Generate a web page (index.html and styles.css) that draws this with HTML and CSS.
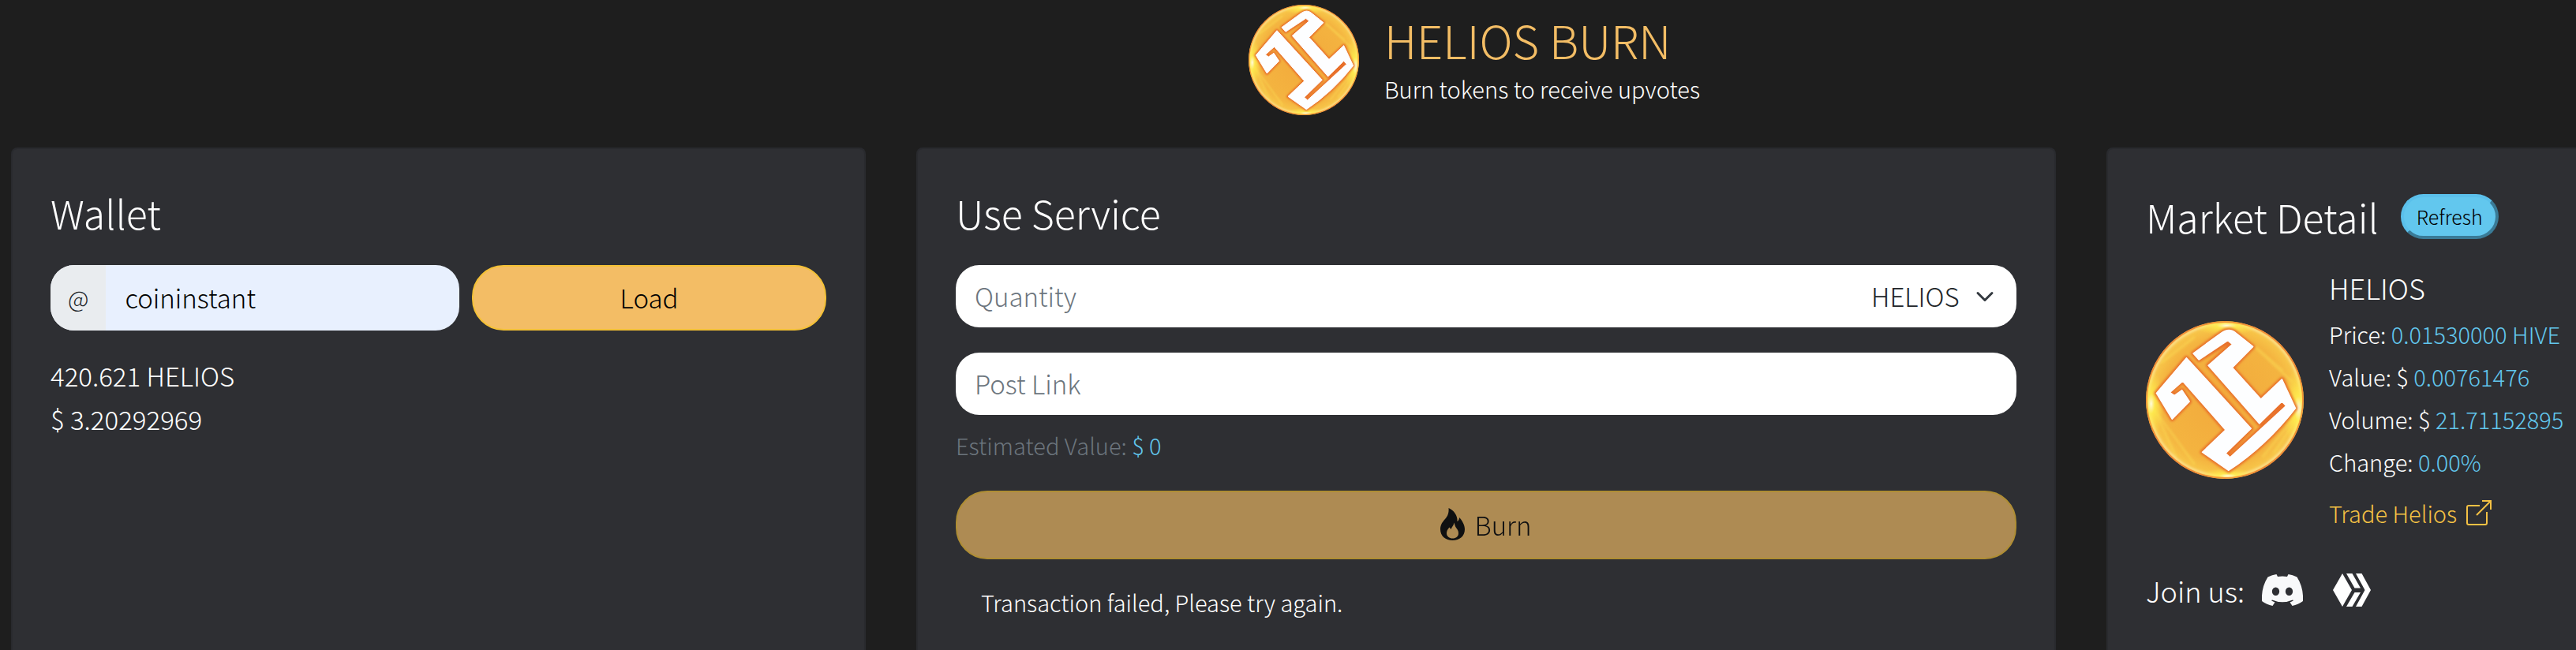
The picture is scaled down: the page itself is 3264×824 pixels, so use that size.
FILE: index.html
```html
<!DOCTYPE html>
<html lang="en">
<head>
<meta charset="utf-8">
<title>Helios Burn</title>
<meta name="viewport" content="width=device-width, initial-scale=1">
<link rel="stylesheet" href="styles.css">
</head>
<body>
<svg class="defs" aria-hidden="true">
  <defs>
    <radialGradient id="coin-fill" cx="50%" cy="50%" r="50%">
      <stop offset="0" stop-color="#f2a93c"/>
      <stop offset="0.8" stop-color="#f4b440"/>
      <stop offset="0.93" stop-color="#f7c448"/>
      <stop offset="1" stop-color="#f5a83c"/>
    </radialGradient>
    <radialGradient id="coin-flare">
      <stop offset="0" stop-color="#fffbe0"/>
      <stop offset="0.3" stop-color="#fff04e" stop-opacity="0.8"/>
      <stop offset="1" stop-color="#ffe94a" stop-opacity="0"/>
    </radialGradient>
    <filter id="coin-soft"><feGaussianBlur stdDeviation="3"/></filter>
    <clipPath id="coin-clip"><circle cx="250" cy="228" r="210"/></clipPath>
    <symbol id="coin" viewBox="40 18 420 420">
      <g clip-path="url(#coin-clip)">
        <circle cx="250" cy="228" r="210" fill="url(#coin-fill)"/>
        <path d="M300 60L405 150M290 50L430 180M80 130L170 60M66 260L120 380M60 250L170 400M440 270L350 380M440 280L380 370" stroke="#fbdc55" stroke-width="6" opacity="0.5" filter="url(#coin-soft)"/>
        <circle cx="250" cy="228" r="203" fill="none" stroke="#fff3a0" stroke-width="5" filter="url(#coin-soft)"/>
        <ellipse cx="255" cy="30" rx="90" ry="26" fill="url(#coin-flare)"/>
        <ellipse cx="54" cy="238" rx="34" ry="90" fill="url(#coin-flare)"/>
        <ellipse cx="446" cy="250" rx="42" ry="110" fill="url(#coin-flare)"/>
        <ellipse cx="258" cy="430" rx="80" ry="20" fill="url(#coin-flare)"/>
        <g stroke-linejoin="round">
          <path class="coin-glow" filter="url(#coin-soft)" d="M166 104L240 50Q262 34 280 50L325 86L270 142L346 226L402 173L438 250Q360 350 260 416L190 367L252 308L138 178L104 208L116 216L136 202L156 232L110 279L68 210L148 116L320 304L254 372L264 381L411 244L404 234L342 291L206 136L268 80L260 72L181 121Z"/>
          <path fill="#fdfeff" stroke="#fdfeff" stroke-width="3" d="M166 104L240 50Q262 34 280 50L325 86L270 142L346 226L402 173L438 250Q360 350 260 416L190 367L252 308L138 178L104 208L116 216L136 202L156 232L110 279L68 210L148 116L320 304L252 370L264 381L413 244L402 232L342 291L206 136L270 80L258 70L181 121Z"/>
        </g>
        <circle cx="250" cy="228" r="208" fill="none" stroke="#ef7f2f" stroke-width="4" opacity="0.8"/>
      </g>
    </symbol>
  </defs>
</svg>

<header class="masthead">
  <svg class="masthead-logo" role="img" aria-label="Helios"><use href="#coin"/></svg>
  <div>
    <h1 class="masthead-title">HELIOS BURN</h1>
    <p class="masthead-tagline">Burn tokens to receive upvotes</p>
  </div>
</header>

<main class="cards">
  <section class="card">
    <h2 class="card-title">Wallet</h2>
    <form class="wallet-form">
      <div class="user-field">
        <label class="user-prefix" for="username">@</label>
        <input class="user-input" id="username" type="text" value="coininstant">
      </div>
      <button class="pill load" type="button">Load</button>
    </form>
    <p class="balance">420.621 HELIOS</p>
    <p class="balance">$ 3.20292969</p>
  </section>

  <section class="card">
    <h2 class="card-title">Use Service</h2>
    <form class="service-form">
      <div class="field">
        <input class="field-input" type="text" placeholder="Quantity" aria-label="Quantity">
        <select class="field-select" aria-label="Token"><option>HELIOS</option></select>
        <svg class="chevron" viewBox="0 0 16 16" aria-hidden="true"><path d="M2 5l6 6 6-6" fill="none" stroke="#343a40" stroke-width="2" stroke-linecap="round" stroke-linejoin="round"/></svg>
      </div>
      <div class="field">
        <input class="field-input" type="text" placeholder="Post Link" aria-label="Post Link">
      </div>
      <p class="estimate">Estimated Value: <span class="info">$ 0</span></p>
      <button class="pill burn" type="button" disabled>
        <svg class="flame" viewBox="0 0 31 41" aria-hidden="true"><path fill-rule="evenodd" d="M10.500 0C17 3 22 9 21.500 17C23 16 24 14.500 24 12C28 16 31 22 31 27C31 35.500 24.500 41 15.500 41C6.500 41 0 35.500 0 27C0 21 3 17.500 6 14C9.500 10 11 6 10.500 0ZM17 18.500C17.500 22 15 23 13.500 27L11.500 24.500C9 27 8 29.500 8 32C8 36 11.500 38.500 15.500 38.500C20 38.500 23 36 23 32C23 28.500 21.500 27 20 25C18.500 23 18.500 20.500 17 18.500Z"/></svg>
        <span>Burn</span>
      </button>
      <p class="status">Transaction failed, Please try again.</p>
    </form>
  </section>

  <section class="card card-market">
    <div class="market-head">
      <h2 class="card-title">Market Detail</h2>
      <button class="refresh" type="button">Refresh</button>
    </div>
    <div class="market">
      <svg class="market-logo" role="img" aria-label="Helios"><use href="#coin"/></svg>
      <div>
        <h3 class="market-token">HELIOS</h3>
        <p class="market-row">Price: <span class="info">0.01530000 HIVE</span></p>
        <p class="market-row">Value: $ <span class="info">0.00761476</span></p>
        <p class="market-row">Volume: $ <span class="info">21.71152895</span></p>
        <p class="market-row">Change: <span class="info">0.00%</span></p>
        <a class="trade" href="#trade">Trade Helios
          <svg class="trade-icon" viewBox="0 0 32 32" aria-hidden="true"><path d="M17 7H3Q1 7 1 9V29Q1 31 3 31H24Q26 31 26 29V15M13 19L31 1M20 1H31V12" fill="none" stroke="currentColor" stroke-width="2"/></svg>
        </a>
      </div>
    </div>
    <div class="join">
      <span>Join us:</span>
      <a class="join-link" href="#discord" aria-label="Discord">
        <svg class="discord" viewBox="0 0 52 40" aria-hidden="true"><path fill="#f8f9fa" fill-rule="evenodd" d="M18.500 0L20 3Q26 2 32 3L33.500 0Q39 .8 44.500 3.500Q53 17 52 34Q46 38.500 38.500 40L35.500 35.500Q38 34.600 40 33.200L39 32.400Q26 38 13 32.400L12 33.200Q14 34.600 16.500 35.500L13.500 40Q6 38.500 0 34Q-1 17 7.500 3.500Q13 .8 18.500 0ZM17.500 16.500A4.600 5.200 0 0 0 17.500 27A4.600 5.200 0 0 0 17.500 16.500ZM34.500 16.500A4.600 5.200 0 0 0 34.500 27A4.600 5.200 0 0 0 34.500 16.500Z"/></svg>
      </a>
      <a class="join-link" href="#hive" aria-label="Hive">
        <svg class="hive" viewBox="0 0 48 42" aria-hidden="true"><path fill="#fff" d="M12 0L24 21L12 42L0 21ZM17 0H24.500L35 18.500H27.500ZM29 0H36.500L48 21L36.500 42H29L40.500 21ZM27.500 24H35L24.500 42H17Z"/></svg>
      </a>
    </div>
  </section>
</main>
</body>
</html>
```
FILE: styles.css
```css
* {
  box-sizing: border-box;
}

body {
  display: flex;
  flex-direction: column;
  min-height: 100vh;
  margin: 0;
  overflow-x: hidden;
  background: #1e1e1e;
  color: #fff;
  font-family: "Noto Sans CJK SC", "Open Sans", sans-serif;
  font-size: 29px;
  font-weight: 300;
  line-height: 48px;
}

h1, h2, h3, p {
  margin: 0;
  font-weight: 300;
}

input, select, button {
  margin: 0;
  font: inherit;
}

.defs {
  position: absolute;
  width: 0;
  height: 0;
}

.coin-glow {
  fill: #e8702a;
  stroke: #e8702a;
  stroke-width: 12px;
}

.info {
  color: #62c7ee;
}

.masthead {
  display: flex;
  justify-content: center;
  gap: 32px;
  padding: 6px 0 41px 472px;
}

.masthead-logo {
  width: 140px;
  height: 140px;
}

.masthead-title {
  padding-top: 6px;
  color: #f3bd65;
  font-size: 58px;
  line-height: 76px;
}

.cards {
  display: grid;
  flex: 1;
  grid-template-columns: 1083fr 1444fr 595fr;
  gap: 64px;
  padding-left: 14px;
}

.card {
  min-width: 0;
  padding: 48px 48px 16px;
  border: 2px solid #292a2e;
  border-bottom: 0;
  border-radius: 8px 8px 0 0;
  background: #2e2f33;
}

.card-market {
  padding-right: 0;
  border-right: 0;
  border-radius: 8px 0 0 0;
}

.card-title {
  font-size: 50px;
  line-height: 64px;
  margin-bottom: 35px;
}

.wallet-form {
  display: grid;
  grid-template-columns: 518fr 449fr;
  gap: 16px;
  margin-bottom: 30px;
}

.user-field {
  display: flex;
  min-width: 0;
  height: 83px;
  overflow: hidden;
  border-radius: 30px;
  background: #e8f0fe;
}

.user-prefix {
  display: flex;
  align-items: center;
  padding: 0 22px 2px;
  background: #e9ecef;
  color: #212529;
}

.user-input {
  flex: 1;
  min-width: 0;
  padding: 0 24px 2px;
  border: 0;
  background: transparent;
  color: #000;
  font-size: 33px;
}

.pill {
  display: flex;
  align-items: center;
  justify-content: center;
  padding: 0 0 2px;
  border: 2px solid #f4c136;
  border-radius: 40px;
  background: #f3bd65;
  color: #000;
  font-size: 33px;
}

.load {
  height: 83px;
}

.balance {
  font-size: 33px;
  line-height: 55px;
}

.service-form {
  display: flex;
  flex-direction: column;
}

.field {
  position: relative;
  display: flex;
  height: 79px;
  margin-bottom: 32px;
  overflow: hidden;
  border-radius: 30px;
  background: #fff;
}

.field-input {
  flex: 1;
  min-width: 0;
  padding: 0 24px 2px;
  border: 0;
  background: transparent;
  color: #212529;
  font-size: 33px;
}

.field-input::placeholder {
  color: #6c757d;
  opacity: 1;
}

.field-select {
  padding: 0 72px 2px 24px;
  border: 0;
  appearance: none;
  background: transparent;
  color: #212529;
  font-size: 33px;
}

.chevron {
  position: absolute;
  top: 28px;
  right: 28px;
  width: 24px;
  height: 24px;
  pointer-events: none;
}

.estimate {
  margin-top: -18px;
  color: #6c757d;
}

.burn {
  gap: 12px;
  height: 87px;
  margin-top: 34px;
  opacity: 0.65;
}

.flame {
  width: 31px;
  height: 41px;
}

.status {
  padding: 30px 32px 0;
}

.market-head {
  display: flex;
  align-items: center;
  gap: 28px;
  padding-top: 5px;
}

.market-head .card-title {
  margin: 0;
}

.refresh {
  height: 57px;
  padding: 0 16px;
  border: 4px outset #5bc0eb;
  border-radius: 30px;
  background: #62c7ee;
  color: #000;
  font-size: 25px;
  line-height: 48px;
}

.market {
  display: flex;
  align-items: center;
  gap: 32px;
  margin-top: 28px;
}

.market-logo {
  flex: none;
  width: 200px;
  height: 200px;
}

.market-token {
  margin-bottom: 2px;
  font-size: 36px;
  line-height: 60px;
}

.market-row {
  line-height: 54px;
  white-space: nowrap;
}

.trade {
  display: flex;
  align-items: center;
  gap: 12px;
  padding: 14px 0 6px;
  color: #f4c144;
  text-decoration: none;
}

.trade-icon {
  width: 32px;
  height: 32px;
}

.join {
  display: flex;
  align-items: center;
  gap: 22px;
  margin-top: 44px;
  font-size: 36px;
}

.join-link {
  display: flex;
  margin-right: 16px;
}

.discord {
  width: 52px;
  height: 40px;
}

.hive {
  width: 48px;
  height: 42px;
}
```
